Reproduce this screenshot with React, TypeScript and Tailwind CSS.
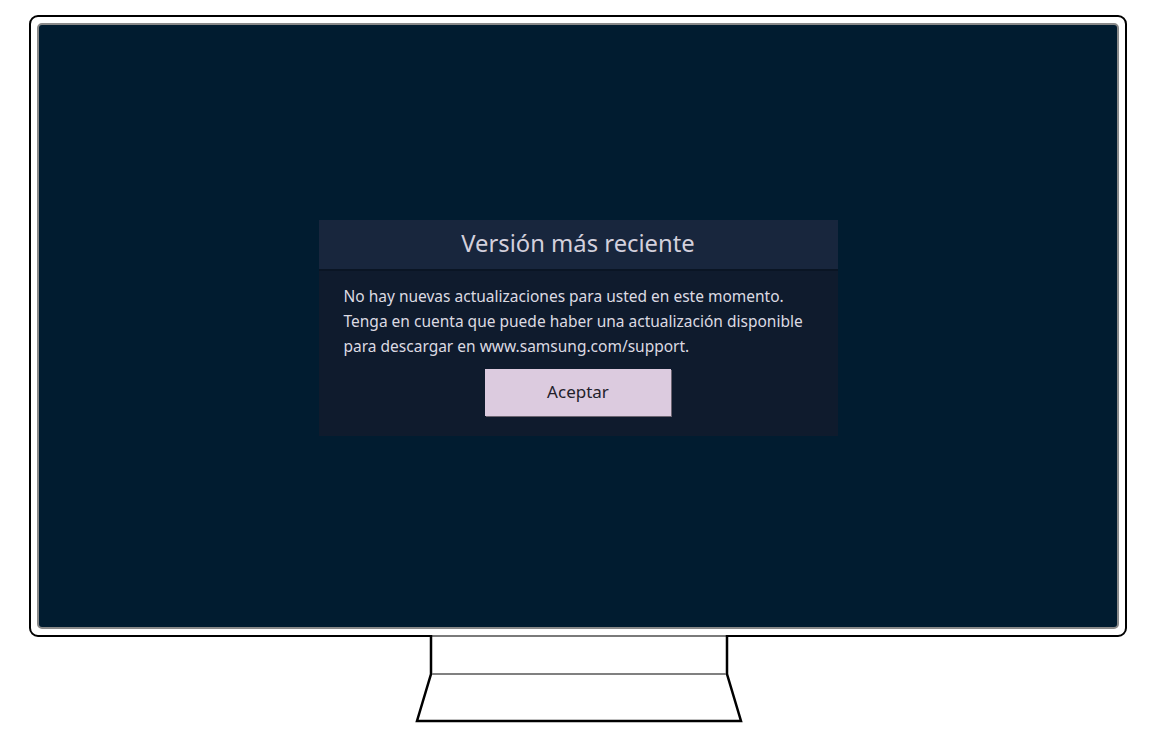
import React from 'react';

// Stand under the TV: short neck plus a flared base
function Stand() {
  return (
    <svg width="1156" height="102" viewBox="0 636 1156 102" className="-mt-[2px] block">
      <line x1="432" y1="637" x2="726" y2="637" stroke="#7a7a7a" strokeWidth="2" />
      <path d="M431 636 V675 L417 722 H741 L727 675 V636" fill="none" stroke="#000" strokeWidth="2.5" strokeLinejoin="miter" />
      <line x1="432" y1="675" x2="726" y2="675" stroke="#808080" strokeWidth="2" />
    </svg>
  );
}

function UpdateDialog() {
  return (
    <div className="w-[519px] bg-[#0f1b2d] font-['Noto_Sans',sans-serif]">
      <div className="h-[51px] flex items-center justify-center bg-[#18263d] border-b-2 border-[#0a1524]">
        <span className="text-[23.8px] text-[#d3d0dc]">Versión más reciente</span>
      </div>
      <div className="pl-[25px] pr-2 pt-[13px] pb-[20px]">
        <p className="text-[15.5px] leading-[25px] text-[#dcdae2]">
          No hay nuevas actualizaciones para usted en este momento.
          <br />
          Tenga en cuenta que puede haber una actualización disponible
          <br />
          para descargar en www.samsung.com/support.
        </p>
        <div className="flex justify-center mt-[10px] pr-[17px]">
          <button className="w-[186px] h-[47px] bg-[#dccbdf] text-[#23212a] text-[17px] shadow-[1px_1px_0_#6b6470]">
            Aceptar
          </button>
        </div>
      </div>
    </div>
  );
}

export default function App() {
  return (
    <div className="w-[1156px] h-[738px] bg-white overflow-hidden">
      <div className="ml-[29px] mt-[15px] w-[1098px] h-[622px] border-2 border-black rounded-[9px] p-[6px] bg-white">
        <div className="w-full h-full border-2 border-[#8a8a8a] rounded-[5px] bg-[#011c30] flex items-center justify-center pt-[3px]">
          <UpdateDialog />
        </div>
      </div>
      <Stand />
    </div>
  );
}
